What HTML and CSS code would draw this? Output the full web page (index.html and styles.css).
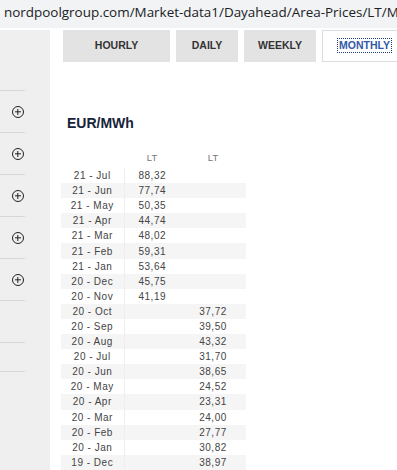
FILE: index.html
```html
<!DOCTYPE html>
<html>
<head>
<meta charset="utf-8">
<link rel="stylesheet" href="styles.css">
</head>
<body>
<div class="urlbar"><span class="url">nordpoolgroup.com/Market-data1/Dayahead/Area-Prices/LT/M</span></div>
<div class="page">
  <aside class="sidebar">
    <div class="side-item top"></div>
    <div class="side-item"><span class="plus"></span></div>
    <div class="side-item"><span class="plus"></span></div>
    <div class="side-item"><span class="plus"></span></div>
    <div class="side-item"><span class="plus"></span></div>
    <div class="side-item"><span class="plus"></span></div>
    <div class="side-item"></div>
    <div class="side-item short"></div>
  </aside>
  <main class="main">
    <nav class="tabs">
      <div class="tab hourly">HOURLY</div>
      <div class="tab daily">DAILY</div>
      <div class="tab weekly">WEEKLY</div>
      <div class="tab monthly active"><span class="focus">MONTHLY</span></div>
    </nav>
    <h2 class="unit">EUR/MWh</h2>
    <table class="prices">
      <thead>
        <tr><th class="c-date"></th><th class="c-v1">LT</th><th class="c-v2">LT</th></tr>
      </thead>
      <tbody>
        <tr><td class="c-date">21 - Jul</td><td class="c-v1">88,32</td><td class="c-v2"></td></tr>
        <tr><td class="c-date">21 - Jun</td><td class="c-v1">77,74</td><td class="c-v2"></td></tr>
        <tr><td class="c-date">21 - May</td><td class="c-v1">50,35</td><td class="c-v2"></td></tr>
        <tr><td class="c-date">21 - Apr</td><td class="c-v1">44,74</td><td class="c-v2"></td></tr>
        <tr><td class="c-date">21 - Mar</td><td class="c-v1">48,02</td><td class="c-v2"></td></tr>
        <tr><td class="c-date">21 - Feb</td><td class="c-v1">59,31</td><td class="c-v2"></td></tr>
        <tr><td class="c-date">21 - Jan</td><td class="c-v1">53,64</td><td class="c-v2"></td></tr>
        <tr><td class="c-date">20 - Dec</td><td class="c-v1">45,75</td><td class="c-v2"></td></tr>
        <tr><td class="c-date">20 - Nov</td><td class="c-v1">41,19</td><td class="c-v2"></td></tr>
        <tr><td class="c-date">20 - Oct</td><td class="c-v1"></td><td class="c-v2">37,72</td></tr>
        <tr><td class="c-date">20 - Sep</td><td class="c-v1"></td><td class="c-v2">39,50</td></tr>
        <tr><td class="c-date">20 - Aug</td><td class="c-v1"></td><td class="c-v2">43,32</td></tr>
        <tr><td class="c-date">20 - Jul</td><td class="c-v1"></td><td class="c-v2">31,70</td></tr>
        <tr><td class="c-date">20 - Jun</td><td class="c-v1"></td><td class="c-v2">38,65</td></tr>
        <tr><td class="c-date">20 - May</td><td class="c-v1"></td><td class="c-v2">24,52</td></tr>
        <tr><td class="c-date">20 - Apr</td><td class="c-v1"></td><td class="c-v2">23,31</td></tr>
        <tr><td class="c-date">20 - Mar</td><td class="c-v1"></td><td class="c-v2">24,00</td></tr>
        <tr><td class="c-date">20 - Feb</td><td class="c-v1"></td><td class="c-v2">27,77</td></tr>
        <tr><td class="c-date">20 - Jan</td><td class="c-v1"></td><td class="c-v2">30,82</td></tr>
        <tr><td class="c-date">19 - Dec</td><td class="c-v1"></td><td class="c-v2">38,97</td></tr>
      </tbody>
    </table>
  </main>
</div>
</body>
</html>
```
FILE: styles.css
```css
* { box-sizing: border-box; }
html, body { margin: 0; padding: 0; background: #fff; overflow: hidden; }
body { width: 397px; height: 470px; font-family: "Liberation Sans", Arial, sans-serif; }

.urlbar {
  height: 29px;
  background: #f1f3f4;
  padding: 2px 0 0 4px;
  white-space: nowrap;
  overflow: hidden;
  border-bottom: 1px solid #fff;
}
.url {
  font-family: "Open Sans", "Noto Sans", sans-serif;
  font-size: 13.45px;
  color: #202124;
  line-height: 21px;
}

.page { display: flex; height: 441px; }

.sidebar {
  width: 50px;
  flex: none;
  background: #efefef;
  display: flex;
  flex-direction: column;
  margin-top: 1px;
}
.side-item {
  height: 42px;
  position: relative;
  display: flex;
  align-items: center;
  padding-left: 12px;
}
.side-item.top { height: 61px; }
.side-item.short { height: 29px; }
.side-item::after {
  content: "";
  position: absolute;
  left: 0;
  bottom: 0;
  width: 27px;
  height: 1px;
  background: linear-gradient(to right, #d6d6d6 80%, #ebebeb);
}
.plus {
  width: 12px;
  height: 12px;
  border: 1.4px solid #222;
  border-radius: 50%;
  position: relative;
}
.plus::before, .plus::after {
  content: "";
  position: absolute;
  background: #222;
  left: 50%;
  top: 50%;
  transform: translate(-50%, -50%);
}
.plus::before { width: 6px; height: 1.4px; }
.plus::after { width: 1.4px; height: 6px; }

.main { flex: 1; padding: 1px 0 0 13px; min-width: 0; }

.tabs { display: flex; gap: 6px; height: 32px; }
.tab {
  background: #e3e3e3;
  font-size: 10.5px;
  font-weight: bold;
  color: #333;
  display: flex;
  align-items: center;
  justify-content: center;
  padding-bottom: 2px;
}
.tab.hourly { width: 107px; }
.tab.daily { width: 62px; }
.tab.weekly { width: 72px; }
.tab.monthly {
  flex: 1;
  background: #fff;
  border: 1px solid #dcdcdc;
  border-right: none;
  justify-content: flex-start;
  padding-left: 16px;
  color: #2f5aa8;
}
.focus { outline: 1px dotted #1c3f7a; outline-offset: 1px; line-height: 11px; }

.unit {
  margin: 53px 0 0 4px;
  font-size: 14px;
  font-weight: bold;
  color: #16233a;
  line-height: 17px;
}

.prices {
  margin: 19px 0 0 -2px;
  border-collapse: collapse;
  font-size: 10px;
  color: #444;
  letter-spacing: 0.5px;
}
.prices th {
  font-weight: normal;
  color: #777;
  letter-spacing: 0;
  height: 17px;
  font-size: 9.5px;
  vertical-align: top;
}
.prices td { height: 15.1px; padding: 0; line-height: 15px; }
.prices tbody tr:nth-child(even) td { background: #f5f5f5; }
.c-date { width: 63px; text-align: center; border-right: 1px solid #eee; }
.c-v1 { width: 56px; text-align: center; }
.c-v2 { width: 66px; text-align: center; }
.prices th.c-date { border-right: none; }
```
